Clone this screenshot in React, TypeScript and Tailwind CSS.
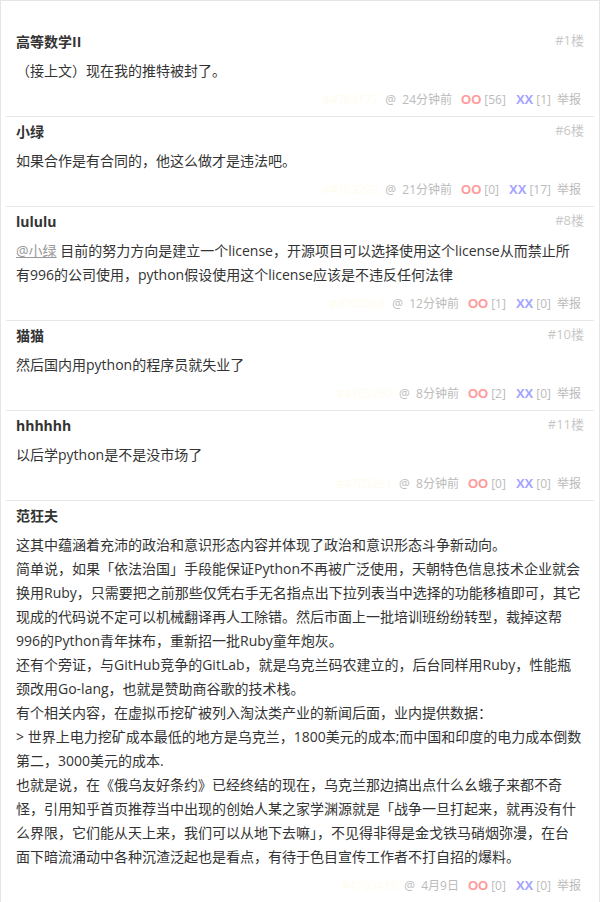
import React from 'react';

type Comment = {
  name: string;
  floor?: string;
  mention?: string;
  lines: string[];
  id: string;
  time: string;
  oo: number;
  xx: number;
};

const comments: Comment[] = [
  {
    name: '高等数学II',
    floor: '#1楼',
    lines: ['（接上文）现在我的推特被封了。'],
    id: '#4703177',
    time: '24分钟前',
    oo: 56,
    xx: 1,
  },
  {
    name: '小绿',
    floor: '#6楼',
    lines: ['如果合作是有合同的，他这么做才是违法吧。'],
    id: '#4703203',
    time: '21分钟前',
    oo: 0,
    xx: 17,
  },
  {
    name: 'lululu',
    floor: '#8楼',
    mention: '@小绿',
    lines: [
      ' 目前的努力方向是建立一个license，开源项目可以选择使用这个license从而禁止所',
      '有996的公司使用，python假设使用这个license应该是不违反任何法律',
    ],
    id: '#4703264',
    time: '12分钟前',
    oo: 1,
    xx: 0,
  },
  {
    name: '猫猫',
    floor: '#10楼',
    lines: ['然后国内用python的程序员就失业了'],
    id: '#4703290',
    time: '8分钟前',
    oo: 2,
    xx: 0,
  },
  {
    name: 'hhhhhh',
    floor: '#11楼',
    lines: ['以后学python是不是没市场了'],
    id: '#4703291',
    time: '8分钟前',
    oo: 0,
    xx: 0,
  },
  {
    name: '范狂夫',
    lines: [
      '这其中蕴涵着充沛的政治和意识形态内容并体现了政治和意识形态斗争新动向。',
      '简单说，如果「依法治国」手段能保证Python不再被广泛使用，天朝特色信息技术企业就会',
      '换用Ruby，只需要把之前那些仅凭右手无名指点出下拉列表当中选择的功能移植即可，其它',
      '现成的代码说不定可以机械翻译再人工除错。然后市面上一批培训班纷纷转型，裁掉这帮',
      '996的Python青年抹布，重新招一批Ruby童年炮灰。',
      '还有个旁证，与GitHub竞争的GitLab，就是乌克兰码农建立的，后台同样用Ruby，性能瓶',
      '颈改用Go-lang，也就是赞助商谷歌的技术栈。',
      '有个相关内容，在虚拟币挖矿被列入淘汰类产业的新闻后面，业内提供数据：',
      '> 世界上电力挖矿成本最低的地方是乌克兰，1800美元的成本;而中国和印度的电力成本倒数',
      '第二，3000美元的成本.',
      '也就是说，在《俄乌友好条约》已经终结的现在，乌克兰那边搞出点什么幺蛾子来都不奇',
      '怪，引用知乎首页推荐当中出现的创始人某之家学渊源就是「战争一旦打起来，就再没有什',
      '么界限，它们能从天上来，我们可以从地下去嘛」，不见得非得是金戈铁马硝烟弥漫，在台',
      '面下暗流涌动中各种沉渣泛起也是看点，有待于色目宣传工作者不打自招的爆料。',
    ],
    id: '#4703415',
    time: '4月9日',
    oo: 0,
    xx: 0,
  },
];

function CommentRow({ c }: { c: Comment }) {
  return (
    <li className="mx-[5px] border-b border-[#e6e6e6] px-[10px] pt-[4px] pb-[6px]">
      <div className="flex h-5 items-center justify-between">
        <span className="text-[14px] font-bold text-[#333]">{c.name}</span>
        {c.floor && <span className="text-[13px] text-[#c8c8c8]">{c.floor}</span>}
      </div>
      <p className="mt-2 whitespace-pre text-[14px] leading-6 text-[#333]">
        {c.lines.map((line, i) => (
          <React.Fragment key={i}>
            {i === 0 && c.mention && (
              <a className="text-[#999] underline">{c.mention}</a>
            )}
            {line}
            {i < c.lines.length - 1 && <br />}
          </React.Fragment>
        ))}
      </p>
      <div className="mt-[7px] flex h-5 items-center justify-end pr-[3px] text-[12px] text-[#bbb]">
        <span className="text-[#fffcee]">{c.id}</span>
        <span className="ml-[7px]">@&nbsp; {c.time}</span>
        <span className="ml-[9px]">
          <b className="font-['Liberation_Sans',sans-serif] text-[13px] font-bold text-[#ff9b9b]">OO</b>
          <span className="ml-[3px]">[{c.oo}]</span>
        </span>
        <span className="ml-[10px]">
          <b className="font-['Liberation_Sans',sans-serif] text-[13px] font-bold text-[#a3a3ff]">XX</b>
          <span className="ml-[3px]">[{c.xx}]</span>
        </span>
        <span className="ml-[6px]">举报</span>
      </div>
    </li>
  );
}

export default function App() {
  return (
    <div className="min-h-screen bg-white font-['Open_Sans','Noto_Sans_CJK_SC',sans-serif]">
      <div className="w-[600px] border border-[#e5e5e5] pt-[26px]">
        <ul>
          {comments.map((c) => (
            <CommentRow key={c.id} c={c} />
          ))}
        </ul>
      </div>
    </div>
  );
}
